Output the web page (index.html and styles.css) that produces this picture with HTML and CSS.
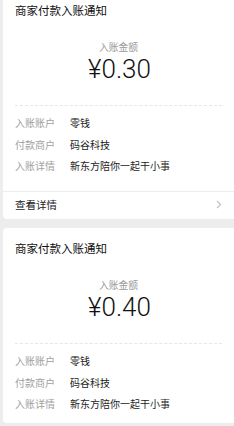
FILE: index.html
```html
<!DOCTYPE html>
<html lang="zh-CN">
<head>
<meta charset="utf-8">
<title>商家付款入账通知</title>
<link rel="stylesheet" href="styles.css">
</head>
<body>
<div class="list">
  <section class="card">
    <h2 class="title">商家付款入账通知</h2>
    <div class="amount-box">
      <div class="amount-label">入账金额</div>
      <div class="amount">¥0.30</div>
    </div>
    <div class="dash"></div>
    <div class="rows">
      <div class="row"><span class="k">入账账户</span><span class="v">零钱</span></div>
      <div class="row"><span class="k">付款商户</span><span class="v">码谷科技</span></div>
      <div class="row"><span class="k">入账详情</span><span class="v">新东方陪你一起干小事</span></div>
    </div>
    <div class="footer">
      <span>查看详情</span>
      <svg class="chev" width="6" height="9" viewBox="0 0 6 9"><polyline points="1,1 4.5,4.5 1,8" fill="none" stroke="#c4c4c4" stroke-width="1.3"/></svg>
    </div>
  </section>
  <section class="card card-short">
    <h2 class="title">商家付款入账通知</h2>
    <div class="amount-box">
      <div class="amount-label">入账金额</div>
      <div class="amount">¥0.40</div>
    </div>
    <div class="dash"></div>
    <div class="rows">
      <div class="row"><span class="k">入账账户</span><span class="v">零钱</span></div>
      <div class="row"><span class="k">付款商户</span><span class="v">码谷科技</span></div>
      <div class="row"><span class="k">入账详情</span><span class="v">新东方陪你一起干小事</span></div>
    </div>
  </section>
</div>
</body>
</html>
```
FILE: styles.css
```css
html, body {
  margin: 0;
  padding: 0;
  background: #ededed;
  font-family: "Noto Sans CJK SC", "Noto Sans", sans-serif;
  overflow: hidden;
}
.list {
  display: flex;
  flex-direction: column;
  gap: 9px;
  padding-left: 3px;
  margin-top: -10px;
}
.card {
  background: #fff;
  border-radius: 4px 0 0 4px;
}
.title {
  margin: 0;
  padding: 12px 12px 0;
  font-size: 11.5px;
  line-height: 16px;
  font-weight: 400;
  color: #111;
}
.amount-box {
  padding-top: 22px;
  text-align: center;
}
.amount-label {
  font-size: 9.8px;
  line-height: 14px;
  color: #9a9a9a;
}
.amount {
  font-family: Roboto, "Liberation Sans", sans-serif;
  font-weight: 300;
  font-size: 26px;
  line-height: 30px;
  color: #111;
  padding-left: 2px;
}
.dash {
  margin: 21px 12px 0;
  border-top: 1px dashed #e6e6e6;
}
.rows {
  padding: 6px 12px 14.5px;
}
.row {
  display: flex;
  font-size: 10px;
  line-height: 21.5px;
}
.k {
  width: 55px;
  color: #a0a0a0;
}
.v {
  color: #222;
}
.card-short .rows {
  padding-bottom: 8.5px;
}
.footer {
  border-top: 1px solid #ececec;
  display: flex;
  align-items: center;
  justify-content: space-between;
  padding: 0 12px 2px;
  height: 25px;
  font-size: 10.5px;
  color: #222;
}
.chev {
  display: block;
}
```
